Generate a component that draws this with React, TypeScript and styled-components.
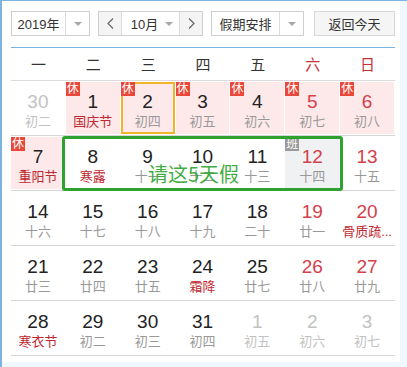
import styled, { createGlobalStyle, css } from "styled-components";

const GlobalStyle = createGlobalStyle`
  html, body {
    margin: 0;
    padding: 0;
    background: #ffffff;
  }
  body {
    font-family: "Liberation Sans", "Noto Sans CJK SC", sans-serif;
  }
`;

type Badge = "休" | "班";

interface Day {
  d: number;
  l: string;
  red?: boolean;
  other?: boolean;
  fest?: boolean;
  bg?: "pink" | "gray";
  badge?: Badge;
  selected?: boolean;
}

const weeks: Day[][] = [
  [
    { d: 30, l: "初二", other: true },
    { d: 1, l: "国庆节", fest: true, bg: "pink", badge: "休" },
    { d: 2, l: "初四", bg: "pink", badge: "休", selected: true },
    { d: 3, l: "初五", bg: "pink", badge: "休" },
    { d: 4, l: "初六", bg: "pink", badge: "休" },
    { d: 5, l: "初七", red: true, bg: "pink", badge: "休" },
    { d: 6, l: "初八", red: true, bg: "pink", badge: "休" },
  ],
  [
    { d: 7, l: "重阳节", fest: true, bg: "pink", badge: "休" },
    { d: 8, l: "寒露", fest: true },
    { d: 9, l: "十一" },
    { d: 10, l: "十二" },
    { d: 11, l: "十三" },
    { d: 12, l: "十四", red: true, bg: "gray", badge: "班" },
    { d: 13, l: "十五", red: true },
  ],
  [
    { d: 14, l: "十六" },
    { d: 15, l: "十七" },
    { d: 16, l: "十八" },
    { d: 17, l: "十九" },
    { d: 18, l: "二十" },
    { d: 19, l: "廿一", red: true },
    { d: 20, l: "骨质疏...", red: true, fest: true },
  ],
  [
    { d: 21, l: "廿三" },
    { d: 22, l: "廿四" },
    { d: 23, l: "廿五" },
    { d: 24, l: "霜降", fest: true },
    { d: 25, l: "廿七" },
    { d: 26, l: "廿八", red: true },
    { d: 27, l: "廿九", red: true },
  ],
  [
    { d: 28, l: "寒衣节", fest: true },
    { d: 29, l: "初二" },
    { d: 30, l: "初三" },
    { d: 31, l: "初四" },
    { d: 1, l: "初五", other: true },
    { d: 2, l: "初六", other: true },
    { d: 3, l: "初七", other: true },
  ],
];

const weekdays = ["一", "二", "三", "四", "五", "六", "日"];

export default function App() {
  return (
    <>
      <GlobalStyle />
      <Frame>
        <Panel>
          <Toolbar>
            <Select $w={79}>
              <SelectText>2019年</SelectText>
              <CaretBox>
                <Caret />
              </CaretBox>
            </Select>
            <MonthPicker>
              <ArrowBtn>
                <svg width="7" height="11" viewBox="0 0 7 11">
                  <polyline points="6,0.5 1,5.5 6,10.5" fill="none" stroke="#666" strokeWidth="1.2" />
                </svg>
              </ArrowBtn>
              <MonthMid>
                <span>10月</span>
                <Caret />
              </MonthMid>
              <ArrowBtn>
                <svg width="7" height="11" viewBox="0 0 7 11">
                  <polyline points="1,0.5 6,5.5 1,10.5" fill="none" stroke="#666" strokeWidth="1.2" />
                </svg>
              </ArrowBtn>
            </MonthPicker>
            <Select $w={93}>
              <SelectText>假期安排</SelectText>
              <CaretBox>
                <Caret />
              </CaretBox>
            </Select>
            <TodayButton>返回今天</TodayButton>
          </Toolbar>
          <BlueRule />
          <WeekHeader>
            {weekdays.map((w, i) => (
              <WeekName key={w} $weekend={i >= 5}>
                {w}
              </WeekName>
            ))}
          </WeekHeader>
          <Body>
            {weeks.map((week, wi) => (
              <WeekRow key={wi}>
                {week.map((day, di) => (
                  <Cell key={di} $bg={day.bg} $selected={day.selected}>
                    {day.badge && <Tag $kind={day.badge}>{day.badge}</Tag>}
                    <Num $red={day.red} $other={day.other}>
                      {day.d}
                    </Num>
                    <Lunar $fest={day.fest} $other={day.other}>
                      {day.l}
                    </Lunar>
                  </Cell>
                ))}
              </WeekRow>
            ))}
            <LeaveBox>
              <LeaveText>请这5天假</LeaveText>
            </LeaveBox>
          </Body>
        </Panel>
      </Frame>
    </>
  );
}

const Frame = styled.div`
  width: 405px;
  height: 366px;
  border-left: 2px solid #7db3de;
  border-top: 1px solid #7db3de;
  background: #eff9fd;
  overflow: hidden;
`;

const Panel = styled.div`
  box-sizing: border-box;
  width: 398px;
  height: 361px;
  background: #ffffff;
  padding: 10px 3px 0 9px;
`;

const Toolbar = styled.div`
  display: flex;
  height: 25px;
  gap: 8px;
`;

const Select = styled.div<{ $w: number }>`
  box-sizing: border-box;
  width: ${(p) => p.$w}px;
  height: 25px;
  border: 1px solid #cfcfcf;
  display: flex;
  align-items: stretch;
  background: #fff;
  font-size: 13px;
  color: #333;
`;

const SelectText = styled.div`
  flex: 1;
  display: flex;
  align-items: center;
  justify-content: center;
`;

const CaretBox = styled.div`
  width: 23px;
  border-left: 1px solid #dcdcdc;
  display: flex;
  align-items: center;
  justify-content: center;
`;

const Caret = styled.i`
  display: inline-block;
  width: 0;
  height: 0;
  border-left: 4px solid transparent;
  border-right: 4px solid transparent;
  border-top: 4px solid #a8a8a8;
`;

const MonthPicker = styled.div`
  box-sizing: border-box;
  width: 105px;
  height: 25px;
  border: 1px solid #cfcfcf;
  display: flex;
`;

const ArrowBtn = styled.div`
  width: 22px;
  background: #f4f4f4;
  display: flex;
  align-items: center;
  justify-content: center;
  &:first-child {
    border-right: 1px solid #dcdcdc;
  }
  &:last-child {
    border-left: 1px solid #dcdcdc;
  }
`;

const MonthMid = styled.div`
  flex: 1;
  display: flex;
  align-items: center;
  justify-content: center;
  gap: 7px;
  font-size: 13px;
  color: #333;
  padding-left: 3px;
`;

const TodayButton = styled.div`
  box-sizing: border-box;
  width: 81px;
  height: 25px;
  margin-left: 2px;
  border: 1px solid #d8d8d8;
  background: #f5f5f5;
  display: flex;
  align-items: center;
  justify-content: center;
  font-size: 13px;
  color: #333;
`;

const BlueRule = styled.div`
  width: 384px;
  height: 1px;
  margin-top: 11px;
  background: #78b4e2;
`;

const WeekHeader = styled.div`
  display: grid;
  grid-template-columns: repeat(7, 1fr);
  width: 384px;
  height: 32px;
  border-bottom: 1px solid #dcdcdc;
`;

const WeekName = styled.div<{ $weekend: boolean }>`
  text-align: center;
  line-height: 33px;
  font-size: 15px;
  color: ${(p) => (p.$weekend ? "#c8303a" : "#333")};
`;

const Body = styled.div`
  position: relative;
  width: 384px;
`;

const WeekRow = styled.div`
  display: grid;
  grid-template-columns: repeat(7, 1fr);
  height: 54px;
  border-bottom: 1px solid #d6d6d6;
  &:last-of-type {
    border-bottom: none;
  }
`;

const Cell = styled.div<{ $bg?: "pink" | "gray"; $selected?: boolean }>`
  position: relative;
  box-sizing: border-box;
  margin: 1px 1px 1px 0;
  height: 52px;
  padding-top: 9px;
  display: flex;
  flex-direction: column;
  align-items: center;
  background: ${(p) =>
    p.$bg === "pink" ? "#fde9ea" : p.$bg === "gray" ? "#f0f1f3" : "#ffffff"};
  ${(p) =>
    p.$selected &&
    css`
      box-shadow: inset 0 0 0 2px #f1b52c;
    `}
`;

const Tag = styled.span<{ $kind: Badge }>`
  position: absolute;
  top: 0;
  left: 0;
  width: 14px;
  height: 14px;
  line-height: 14px;
  text-align: center;
  font-size: 12px;
  color: #fff;
  background: ${(p) => (p.$kind === "休" ? "#e9473a" : "#9a9a9a")};
`;

const Num = styled.div<{ $red?: boolean; $other?: boolean }>`
  font-size: 19px;
  line-height: 22px;
  color: ${(p) => (p.$other ? "#c2c2c2" : p.$red ? "#d5404a" : "#222")};
`;

const Lunar = styled.div<{ $fest?: boolean; $other?: boolean }>`
  font-size: 13px;
  line-height: 18px;
  white-space: nowrap;
  color: ${(p) => (p.$other ? "#c2c2c2" : p.$fest ? "#c0272f" : "#999")};
`;

const LeaveBox = styled.div`
  position: absolute;
  box-sizing: border-box;
  left: 51px;
  top: 55px;
  width: 281px;
  height: 55px;
  border: 3px solid #2ea22e;
  border-radius: 3px;
  display: flex;
  justify-content: center;
  padding: 23px 18px 0 0;
  pointer-events: none;
`;

const LeaveText = styled.span`
  font-size: 20px;
  line-height: 24px;
  color: rgba(46, 164, 46, 0.92);
  font-family: "Noto Sans CJK SC", "Liberation Sans", sans-serif;
`;
